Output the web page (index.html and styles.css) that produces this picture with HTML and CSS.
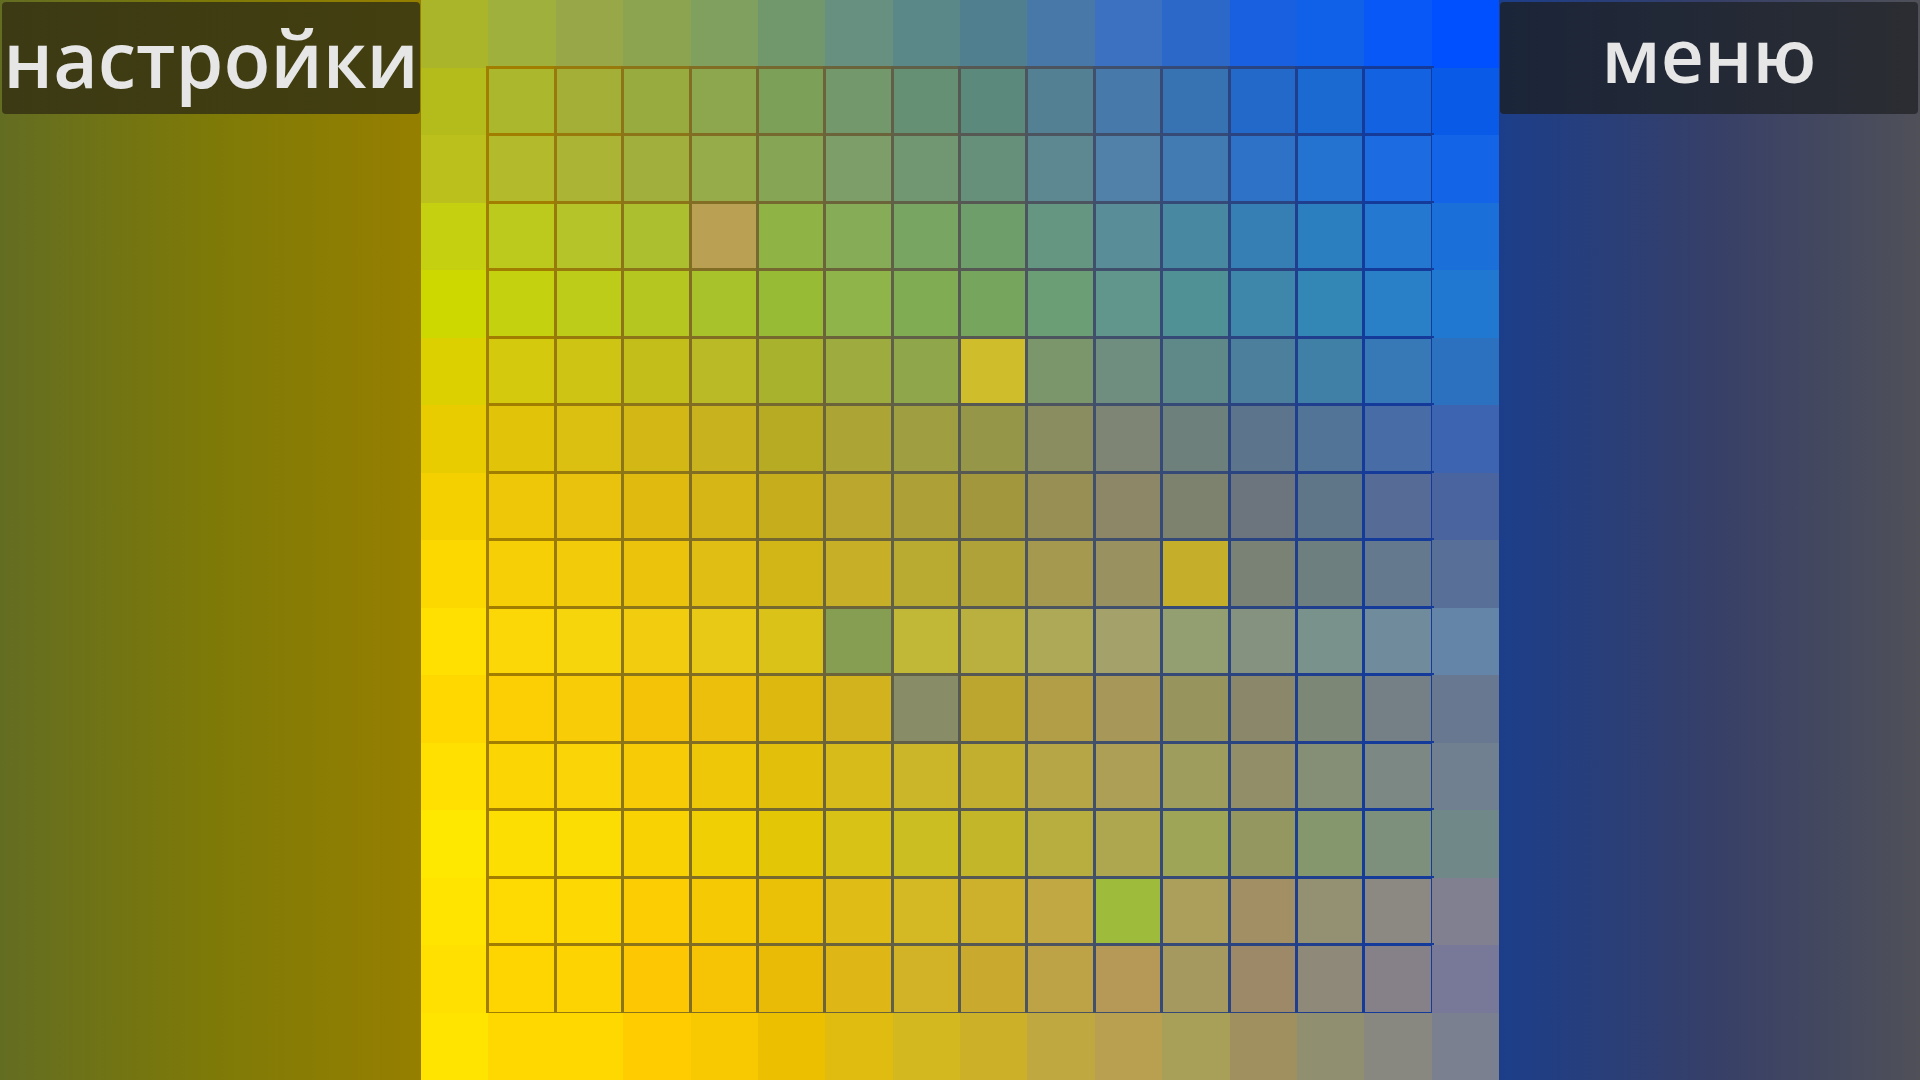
FILE: index.html
```html
<!DOCTYPE html>
<html lang="ru">
<head>
<meta charset="utf-8">
<title>Hue</title>
<link rel="stylesheet" href="styles.css">
</head>
<body>
<div class="app">
  <aside class="panel panel-left">
    <div class="header"><span class="title title-left">настройки</span></div>
  </aside>
  <main class="board" id="board"></main>
  <aside class="panel panel-right">
    <div class="header"><span class="title title-right">меню</span></div>
  </aside>
</div>
<script src="script.js"></script>
</body>
</html>
```

FILE: styles.css
```css
html, body {
  margin: 0;
  padding: 0;
}
body {
  background: #3b3a22;
  font-family: "Open Sans", "Noto Sans", sans-serif;
  overflow: hidden;
}
.app {
  display: grid;
  grid-template-columns: 421px 1078px 421px;
  height: 1080px;
  overflow: hidden;
}
.panel {
  display: flex;
  flex-direction: column;
  box-sizing: border-box;
}
.panel-left {
  background: linear-gradient(90deg, #636d22 0%, #7e7a08 50%, #967f00 100%);
  padding: 2px 1px 0 2px;
}
.panel-right {
  background: linear-gradient(90deg, #1c3e8a 0%, #363f68 50%, #4f5058 100%);
  padding: 2px 2px 0 1px;
}
.header {
  height: 112px;
  border-radius: 4px;
  display: flex;
  align-items: center;
  justify-content: center;
  color: #e6e6e6;
  overflow: visible;
  white-space: nowrap;
}
.panel-left .header {
  background: linear-gradient(90deg, #3c3a14, #433f10);
}
.panel-right .header {
  background: linear-gradient(90deg, #1b2539, #2b2d32);
}
.title-left {
  font-size: 77px;
  font-weight: 600;
}
.title-right {
  font-size: 75px;
  font-weight: 600;
  margin-bottom: 8px;
}
.board {
  display: grid;
  grid-template-columns: repeat(16, 1fr);
  grid-template-rows: repeat(16, 1fr);
}
.cell {
  min-width: 0;
  min-height: 0;
}
.cell.inner {
  outline: 3px solid #808000;
  outline-offset: -1.5px;
}
```

FILE: script.js
```js
(function () {
  function hex(h) {
    return [parseInt(h.slice(1, 3), 16), parseInt(h.slice(3, 5), 16), parseInt(h.slice(5, 7), 16)];
  }
  var left = ["#aab52a","#b4bc1c","#bcc01c","#c4d010","#ccd800","#dcd000","#e8cc00","#f4d000","#fcd800","#ffe000","#ffd800","#ffe000","#ffe800","#ffe400","#ffe000","#ffe400"].map(hex);
  var right = ["#0050ff","#0a5ae8","#1464e8","#1a70d8","#2078d0","#2c70c0","#3c64b0","#4a64a0","#587098","#6484a8","#687890","#708090","#708888","#808090","#787898","#7a8090"].map(hex);
  var top = ["#aab52a","#a0b03c","#98a848","#8ca450","#80a060","#70986c","#689080","#5a8888","#508090","#4878a8","#3c70c0","#2c68c8","#1860e0","#1060e8","#0858f8","#0050ff"].map(hex);
  var bottom = ["#ffe400","#ffd800","#ffd800","#ffcc00","#f8c800","#ecc000","#e0bc10","#d4b820","#ccb028","#c0a840","#b8a050","#a8a058","#a09060","#909070","#888880","#7a8090"].map(hex);
  var TL = top[0], TR = top[15], BL = bottom[0], BR = bottom[15];
  var N = 16;
  var colors = [];
  for (var r = 0; r < N; r++) {
    colors.push([]);
    for (var c = 0; c < N; c++) {
      var u = c / 15, v = r / 15, col = [];
      for (var k = 0; k < 3; k++) {
        var val = (1 - v) * top[c][k] + v * bottom[c][k] + (1 - u) * left[r][k] + u * right[r][k]
          - ((1 - u) * (1 - v) * TL[k] + u * (1 - v) * TR[k] + (1 - u) * v * BL[k] + u * v * BR[k]);
        col.push(Math.max(0, Math.min(255, Math.round(val))));
      }
      colors[r].push(col);
    }
  }
  function swap(a, b) {
    var t = colors[a[0]][a[1]];
    colors[a[0]][a[1]] = colors[b[0]][b[1]];
    colors[b[0]][b[1]] = t;
  }
  swap([3, 4], [13, 10]);
  swap([5, 8], [9, 6]);
  swap([8, 11], [10, 7]);

  var lineL = hex("#a27e00"), lineR = hex("#143a9a");
  var board = document.getElementById("board");
  var frag = document.createDocumentFragment();
  for (var r2 = 0; r2 < N; r2++) {
    for (var c2 = 0; c2 < N; c2++) {
      var d = document.createElement("div");
      d.className = "cell";
      var cc = colors[r2][c2];
      d.style.background = "rgb(" + cc.join(",") + ")";
      if (r2 >= 1 && r2 <= 14 && c2 >= 1 && c2 <= 14) {
        d.className += " inner";
        var t = (c2 - 1) / 13;
        var lc = [0, 1, 2].map(function (k) { return Math.round(lineL[k] + (lineR[k] - lineL[k]) * t); });
        d.style.outlineColor = "rgb(" + lc.join(",") + ")";
      }
      frag.appendChild(d);
    }
  }
  board.appendChild(frag);
})();
```
